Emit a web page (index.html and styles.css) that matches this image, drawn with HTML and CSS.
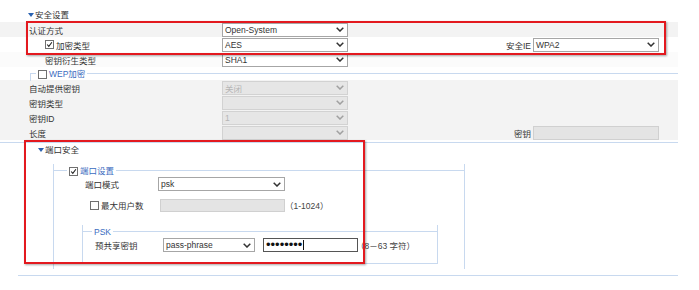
FILE: index.html
```html
<!DOCTYPE html>
<html lang="zh-CN">
<head>
    <meta charset="UTF-8" />
    <title>安全设置</title>
    <link rel="stylesheet" href="styles.css">
</head>
<body>
<div class="page">
    <div class="sec-title"><span class="arrow"></span>安全设置</div>

    <div class="row gray">
        <span class="lbl">认证方式</span>
        <div class="sel"><span>Open-System</span><svg class="chev" viewBox="0 0 8 5"><path d="M0.7 0.7 L4 4 L7.3 0.7"/></svg></div>
    </div>
    <div class="row">
        <span class="lbl sub"><span class="cb on"><svg viewBox="0 0 9 9"><path d="M1.5 4.5 L3.6 6.8 L7.6 1.6"/></svg></span>加密类型</span>
        <div class="sel"><span>AES</span><svg class="chev" viewBox="0 0 8 5"><path d="M0.7 0.7 L4 4 L7.3 0.7"/></svg></div>
        <div class="side">
            <span class="side-lbl">安全IE</span>
            <div class="sel"><span>WPA2</span><svg class="chev" viewBox="0 0 8 5"><path d="M0.7 0.7 L4 4 L7.3 0.7"/></svg></div>
        </div>
    </div>
    <div class="row light">
        <span class="lbl sub">密钥衍生类型</span>
        <div class="sel"><span>SHA1</span><svg class="chev" viewBox="0 0 8 5"><path d="M0.7 0.7 L4 4 L7.3 0.7"/></svg></div>
    </div>

    <div class="wep">
        <div class="fs-head wep-head">
            <span class="corner"></span>
            <span class="legend"><span class="cb"></span>WEP加密</span>
            <span class="rule"></span>
        </div>
        <div class="row gray">
            <span class="lbl">自动提供密钥</span>
            <div class="sel off"><span>关闭</span><svg class="chev" viewBox="0 0 8 5"><path d="M0.7 0.7 L4 4 L7.3 0.7"/></svg></div>
        </div>
        <div class="row gray">
            <span class="lbl">密钥类型</span>
            <div class="sel off"><span></span><svg class="chev" viewBox="0 0 8 5"><path d="M0.7 0.7 L4 4 L7.3 0.7"/></svg></div>
        </div>
        <div class="row gray">
            <span class="lbl">密钥ID</span>
            <div class="sel off"><span>1</span><svg class="chev" viewBox="0 0 8 5"><path d="M0.7 0.7 L4 4 L7.3 0.7"/></svg></div>
        </div>
        <div class="row gray">
            <span class="lbl">长度</span>
            <div class="sel off"><span></span><svg class="chev" viewBox="0 0 8 5"><path d="M0.7 0.7 L4 4 L7.3 0.7"/></svg></div>
            <div class="side">
                <span class="side-lbl">密钥</span>
                <div class="inp off"></div>
            </div>
        </div>
        <div class="wep-foot"></div>
    </div>

    <div class="port">
        <div class="sec-title port-title"><span class="arrow"></span>端口安全</div>
        <div class="fs outer">
            <div class="fs-head outer-head">
                <span class="corner"></span>
                <span class="legend"><span class="cb on"><svg viewBox="0 0 9 9"><path d="M1.5 4.5 L3.6 6.8 L7.6 1.6"/></svg></span>端口设置</span>
                <span class="rule"></span>
            </div>
            <div class="prow mode-row">
                <span class="plbl">端口模式</span>
                <div class="sel psk"><span>psk</span><svg class="chev" viewBox="0 0 8 5"><path d="M0.7 0.7 L4 4 L7.3 0.7"/></svg></div>
            </div>
            <div class="prow max-row">
                <span class="plbl"><span class="cb"></span>最大用户数</span>
                <div class="inp off max"></div>
                <span class="hint">（1-1024）</span>
            </div>

            <div class="fs inner">
                <div class="fs-head inner-head">
                    <span class="corner"></span>
                    <span class="legend">PSK</span>
                    <span class="rule"></span>
                </div>
                <div class="prow key-row">
                    <span class="plbl">预共享密钥</span>
                    <div class="sel phrase"><span>pass-phrase</span><svg class="chev" viewBox="0 0 8 5"><path d="M0.7 0.7 L4 4 L7.3 0.7"/></svg></div>
                    <div class="inp pwd"><span class="dots">••••••••</span><span class="caret"></span></div>
                    <span class="hint">（8－63 字符）</span>
                </div>
            </div>
        </div>
    </div>

    <div class="mark mark-top"></div>
    <div class="mark mark-port"></div>
</div>
</body>
</html>
```

FILE: styles.css
```css
body {
    margin: 0;
    padding: 0;
    background-color: #FFFFFF;
    color: #333333;
    font-family: "Liberation Sans", "Noto Sans CJK SC", sans-serif;
    font-size: 8.5px;
}

.page {
    position: relative;
    width: 699px;
    height: 290px;
    padding-top: 8px;
    box-sizing: border-box;
}

.sec-title {
    height: 14px;
    line-height: 14px;
    padding-left: 28px;
    display: flex;
    align-items: center;
}

.arrow {
    width: 0;
    height: 0;
    border-left: 3.5px solid transparent;
    border-right: 3.5px solid transparent;
    border-top: 4px solid #2A62B0;
    margin-right: 1px;
}

.row {
    width: 678px;
    height: 15px;
    padding-left: 29px;
    box-sizing: border-box;
    display: flex;
    align-items: center;
}

.row.gray {
    background-color: #F3F3F3;
}

.row.light {
    background-color: #FBFBFB;
}

.lbl {
    width: 193px;
    display: flex;
    align-items: center;
}

.lbl.sub {
    padding-left: 16px;
    box-sizing: border-box;
}

.side {
    margin-left: auto;
    margin-right: 19px;
    display: flex;
    align-items: center;
}

.side-lbl {
    margin-right: 2px;
}

.sel {
    width: 126px;
    height: 14px;
    box-sizing: border-box;
    border: 1px solid #A6A6A6;
    background-color: #FFFFFF;
    display: flex;
    align-items: center;
    justify-content: space-between;
    padding: 0 3px 0 2px;
    color: #333333;
}

.sel.off {
    background-color: #E6E6E6;
    border-color: #D2D2D2;
    color: #B5B5B5;
}

.chev {
    width: 8px;
    height: 5px;
    fill: none;
    stroke: #333333;
    stroke-width: 1.5;
}

.sel.off .chev {
    stroke: #A0A0A0;
}

.inp {
    width: 126px;
    height: 14px;
    box-sizing: border-box;
    border: 1px solid #A6A6A6;
    background-color: #FFFFFF;
}

.inp.off {
    background-color: #E4E4E4;
    border-color: #D0D0D0;
}

.cb {
    width: 9px;
    height: 9px;
    box-sizing: border-box;
    border: 1px solid #707070;
    background-color: #FFFFFF;
    display: inline-flex;
    margin-right: 2px;
    flex-shrink: 0;
}

.cb svg {
    width: 7px;
    height: 7px;
    fill: none;
    stroke: #222222;
    stroke-width: 1.4;
}

/* fieldset-like boxes */
.fs-head {
    height: 13px;
    display: flex;
    align-items: flex-start;
}

.corner {
    margin-top: 6px;
    height: 7px;
    border-top: 1px solid #C8D9EF;
    border-left: 1px solid #C8D9EF;
}

.rule {
    flex: 1;
    margin-top: 6px;
    border-top: 1px solid #C8D9EF;
}

.legend {
    line-height: 13px;
    padding: 1px 2px 0 2px;
    color: #3A6CC0;
    display: flex;
    align-items: center;
}

.wep-head {
    width: 648px;
    margin-left: 30px;
    margin-top: 0;
    padding-top: 0;
}

.wep-head .corner {
    width: 5px;
}

.wep {
    padding-top: 0;
}

.wep .row:first-of-type {
    margin-top: 0;
}

.wep-foot {
    width: 678px;
    height: 1px;
    margin-top: 1px;
    border-bottom: 1px solid #C8D9EF;
}

.port {
    width: 660px;
    margin-left: 18px;
    height: 133px;
    box-sizing: border-box;
    border-bottom: 1px solid #C8D9EF;
}

.port-title {
    padding-left: 20px;
}

.fs.outer {
    width: 412px;
    margin-left: 35px;
    margin-top: 7px;
    height: 105px;
    box-sizing: border-box;
    border-left: 1px solid #C8D9EF;
    border-right: 1px solid #C8D9EF;
    margin-bottom: 0;
}

.fs.outer .fs-head {
    margin-left: -1px;
    margin-right: -1px;
}

.outer-head .corner {
    width: 13px;
}

.outer-head .corner,
.outer-head .rule {
    height: 7px;
}

.outer-head .rule {
    border-right: 1px solid #C8D9EF;
}

.prow {
    display: flex;
    align-items: center;
    height: 14px;
}

.plbl {
    display: flex;
    align-items: center;
}

.mode-row {
    padding-left: 31px;
}

.mode-row .plbl {
    width: 73px;
}

.sel.psk {
    width: 127px;
}

.max-row {
    margin-top: 7px;
    padding-left: 36px;
}

.max-row .plbl {
    width: 70px;
}

.inp.max {
    width: 125px;
    height: 13px;
}

.hint {
    color: #444444;
}

.fs.inner {
    width: 356px;
    margin-left: 28px;
    margin-top: 13px;
    height: 39px;
    box-sizing: border-box;
    border-left: 1px solid #C8D9EF;
    border-right: 1px solid #C8D9EF;
    border-bottom: 1px solid #C8D9EF;
}

.inner-head {
    margin-left: -1px;
    margin-right: -1px;
}

.inner-head .corner {
    width: 9px;
}

.inner-head .rule {
    height: 7px;
    border-right: 1px solid #C8D9EF;
}

.key-row {
    padding-left: 12px;
}

.key-row .plbl {
    width: 68px;
}

.sel.phrase {
    width: 92px;
}

.inp.pwd {
    width: 95px;
    margin-left: 8px;
    border-color: #555555;
    display: flex;
    align-items: center;
    padding-left: 2px;
    color: #111111;
    overflow: hidden;
}

.dots {
    font-family: "Liberation Sans", sans-serif;
    font-size: 13px;
    line-height: 12px;
}

.caret {
    width: 1px;
    height: 10px;
    background-color: #111111;
    margin-left: 1px;
}

.key-row .hint {
    margin-left: -2px;
}

/* red annotation frames drawn over the form */
.mark {
    position: absolute;
    border: 2px solid #E3191F;
    box-shadow: 1px 1px 2px rgba(0, 0, 0, 0.35);
    box-sizing: border-box;
}

.mark-top {
    left: 26px;
    top: 21px;
    width: 640px;
    height: 34px;
}

.mark-port {
    left: 24px;
    top: 140px;
    width: 341px;
    height: 124px;
}
```
